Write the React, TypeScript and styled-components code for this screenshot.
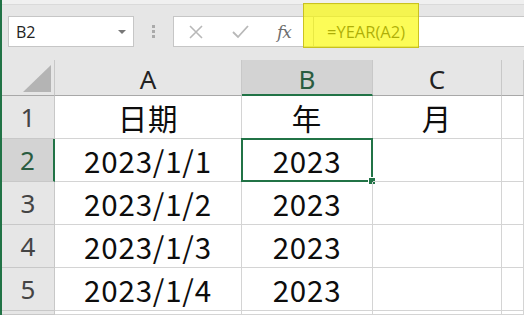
import React from "react";
import styled, { createGlobalStyle, css } from "styled-components";

const GlobalStyle = createGlobalStyle`
  html, body {
    margin: 0;
    padding: 0;
    background: #fff;
  }
  * {
    box-sizing: border-box;
  }
`;

const Window = styled.div`
  position: relative;
  width: 524px;
  height: 315px;
  overflow: hidden;
  border-left: 2px solid #217346;
  background: #e6e6e6;
  font-family: "Noto Sans", "Liberation Sans", sans-serif;
`;

const TopStrip = styled.div`
  height: 5px;
  background: #f0f0f0;
  border-bottom: 1px solid #dadada;
`;

const Toolbar = styled.div`
  display: flex;
  align-items: flex-start;
  height: 55px;
  padding: 11px 0 0 6px;
`;

const NameBox = styled.div`
  display: flex;
  align-items: center;
  justify-content: space-between;
  width: 126px;
  height: 31px;
  padding: 0 7px 0 7px;
  background: #fff;
  border: 1px solid #c6c6c6;
  font-family: "Open Sans", "Noto Sans", sans-serif;
  font-size: 16px;
  color: #222;
`;

const Caret = styled.span`
  width: 0;
  height: 0;
  border-left: 4px solid transparent;
  border-right: 4px solid transparent;
  border-top: 4px solid #777;
  margin-top: 1px;
`;

const Grip = styled.div`
  display: flex;
  flex-direction: column;
  gap: 2px;
  width: 39px;
  padding-top: 9px;
  align-items: center;

  & > span {
    width: 3px;
    height: 3px;
    background: #aaa;
  }
`;

const FormulaBar = styled.div`
  display: flex;
  align-items: center;
  flex: 1;
  height: 31px;
  background: #fff;
  border: 1px solid #c6c6c6;
  border-right: none;
`;

const IconButton = styled.span`
  display: flex;
  align-items: center;
  justify-content: center;
  width: 44px;
  height: 100%;
`;

const Fx = styled.span`
  font-family: "DejaVu Serif", "Liberation Serif", serif;
  font-style: italic;
  font-size: 17px;
  color: #6e6e6e;
  width: 44px;
  text-align: center;
  letter-spacing: -1px;
`;

const FormulaInput = styled.div`
  flex: 1;
  height: 100%;
  margin-left: 7px;
  border-left: 1px solid #c6c6c6;
  display: flex;
  align-items: center;
  padding-left: 13px;
  font-family: "Open Sans", "Noto Sans", sans-serif;
  font-size: 16.5px;
  color: #1a1a1a;
`;

const Highlight = styled.div`
  position: absolute;
  left: 301px;
  top: 3px;
  width: 116px;
  height: 45px;
  background: rgba(250, 250, 0, 0.66);
  border: 1px solid rgba(190, 180, 20, 0.8);
  pointer-events: none;
`;

const Sheet = styled.div`
  display: grid;
  grid-template-columns: 53px 187px 131px 129px 1fr;
  grid-template-rows: 36px repeat(5, 43px) 1fr;
  height: 255px;
  background: #fff;
`;

const Corner = styled.div`
  position: relative;
  background: #e6e6e6;
  border-right: 1px solid #c8c8c8;
  border-bottom: 1px solid #a8a8a8;

  &::after {
    content: "";
    position: absolute;
    right: 3px;
    bottom: 3px;
    width: 0;
    height: 0;
    border-left: 28px solid transparent;
    border-bottom: 27px solid #b4b4b4;
  }
`;

const ColHeader = styled.div<{ $active?: boolean }>`
  display: flex;
  align-items: center;
  justify-content: center;
  padding-top: 3px;
  background: #e6e6e6;
  border-right: 1px solid #c8c8c8;
  border-bottom: 1px solid #a8a8a8;
  font-size: 26px;
  color: #222;

  ${(p) =>
    p.$active &&
    css`
      background: #d3d3d3;
      color: #2a5c40;
      border-bottom: 2px solid #217346;
    `}
`;

const RowHeader = styled.div<{ $active?: boolean }>`
  display: flex;
  align-items: center;
  justify-content: center;
  background: #e6e6e6;
  border-right: 1px solid #c8c8c8;
  border-bottom: 1px solid #c8c8c8;
  font-size: 26px;
  color: #444;

  ${(p) =>
    p.$active &&
    css`
      background: #d3d3d3;
      color: #2a5c40;
      border-right: 2px solid #217346;
    `}
`;

const Cell = styled.div<{ $selected?: boolean }>`
  position: relative;
  display: flex;
  align-items: center;
  justify-content: center;
  border-right: 1px solid #d4d4d4;
  border-bottom: 1px solid #d4d4d4;
  font-family: "Noto Sans CJK SC", "Noto Sans", sans-serif;
  font-size: 29.5px;
  color: #0d0d0d;
  letter-spacing: 0.8px;

  ${(p) =>
    p.$selected &&
    css`
      &::before {
        content: "";
        position: absolute;
        left: -1px;
        top: -1px;
        right: -1px;
        bottom: -1px;
        border: 2px solid #217346;
      }
      &::after {
        content: "";
        position: absolute;
        right: -4px;
        bottom: -4px;
        width: 6px;
        height: 6px;
        background: #217346;
        border: 1px solid #fff;
      }
    `}
`;

const cols = ["A", "B", "C", ""];
const rows: string[][] = [
  ["日期", "年", "月", ""],
  ["2023/1/1", "2023", "", ""],
  ["2023/1/2", "2023", "", ""],
  ["2023/1/3", "2023", "", ""],
  ["2023/1/4", "2023", "", ""],
];

export default function App() {
  return (
    <>
      <GlobalStyle />
      <Window>
        <TopStrip />
        <Toolbar>
          <NameBox>
            B2
            <Caret />
          </NameBox>
          <Grip>
            <span />
            <span />
            <span />
          </Grip>
          <FormulaBar>
            <IconButton>
              <svg width="14" height="14" viewBox="0 0 14 14">
                <path d="M1 1 L13 13 M13 1 L1 13" stroke="#b8b8b8" strokeWidth="1.6" />
              </svg>
            </IconButton>
            <IconButton>
              <svg width="17" height="14" viewBox="0 0 17 14">
                <path d="M1 7 L6 12 L16 1" stroke="#b8b8b8" strokeWidth="1.8" fill="none" />
              </svg>
            </IconButton>
            <Fx>fx</Fx>
            <FormulaInput>=YEAR(A2)</FormulaInput>
          </FormulaBar>
        </Toolbar>
        <Sheet>
          <Corner />
          {cols.map((c, i) => (
            <ColHeader key={i} $active={c === "B"}>
              {c}
            </ColHeader>
          ))}
          {rows.map((r, ri) => (
            <React.Fragment key={ri}>
              <RowHeader $active={ri === 1}>{ri + 1}</RowHeader>
              {r.map((v, ci) => (
                <Cell key={ci} $selected={ri === 1 && ci === 1}>
                  {v}
                </Cell>
              ))}
            </React.Fragment>
          ))}
          <RowHeader />
          <Cell />
          <Cell />
          <Cell />
          <Cell />
        </Sheet>
        <Highlight />
      </Window>
    </>
  );
}
